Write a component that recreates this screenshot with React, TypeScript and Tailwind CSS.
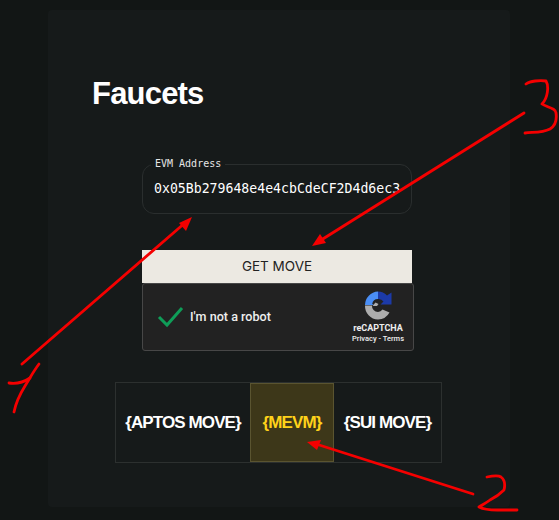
import React from 'react';

const tabs = [
    { label: '{APTOS MOVE}', width: 'w-[134px]', active: false },
    { label: '{MEVM}', width: 'w-[84px]', active: true },
    { label: '{SUI MOVE}', width: 'w-[107px]', active: false },
];

const RecaptchaLogo: React.FC = () => (
    <svg width="28" height="29" viewBox="0 0 28 29">
        <path d="M1 14 A13.5 13.5 0 0 1 14 0.5 L14 8 A6 6 0 0 0 8.2 13 L10 14 L1 14 Z" fill="#4a8ef5" />
        <path d="M14 0.5 A13.5 13.5 0 0 1 23 4.5 L27.5 1.5 L27.5 13.5 L16.5 13.5 L19.5 10.5 A6 6 0 0 0 14 8 Z" fill="#1c3aa8" />
        <path d="M1 14.5 L8 14.5 A6 6 0 0 0 14 21 A6 6 0 0 0 18.5 18.5 L25.5 21.5 A13.5 13.5 0 0 1 14 28.5 A13.5 13.5 0 0 1 1 14.5 Z" fill="#adadad" />
        <path d="M8.5 15 L11.5 11.5 L14.5 13 L13 15 Z" fill="#adadad" />
    </svg>
);

const Annotations: React.FC = () => (
    <svg className="absolute left-0 top-0 pointer-events-none" width="559" height="520" viewBox="0 0 559 520" fill="none">
        <g stroke="#f50000" strokeWidth="2.8" strokeLinecap="round" strokeLinejoin="round">
            <path d="M22 364 L186 222" />
            <path d="M39 364 C33 372 30 378 25 386 C20 394 16 402 14 412" />
            <path d="M9 383 C16 384 24 382 30 378" />
            <path d="M524 113 L318 242" />
            <path d="M526 84 C530 81 540 80 546 81 C549 86 548 98 542 104 C546 107 556 108 556 113 C557 120 555 126 550 129 C542 133 533 132 525 133" />
            <path d="M316 444 L473 494" />
            <path d="M487 477 C492 476 498 475 501 477 C505 480 505 486 504 490 C499 495 494 498 490 500 C486 503 482 505 479 507 C485 510 491 510 497 510 L517 510" />
        </g>
        <path d="M192 217 L179 223 L186 231 Z" fill="#f50000" />
        <path d="M312 246 L326 243 L320 234 Z" fill="#f50000" />
        <path d="M307 442 L321 440 L317 450 Z" fill="#f50000" />
    </svg>
);

const App: React.FC = () => {
    return (
        <div className="relative w-[559px] h-[520px] overflow-hidden bg-[#121615] pt-[10px] pl-[48px] font-['Inter',sans-serif]">
            <div className="w-[462px] h-[497px] bg-[#161a1a] rounded-sm">
                <h1 className="pl-[44px] pt-[65px] text-[31px] leading-[38px] font-bold tracking-[-0.8px] text-white font-['Liberation_Sans',sans-serif]">
                    Faucets
                </h1>

                <div className="ml-[94px] mt-[46px] w-[272px]">
                    <fieldset className="w-[270px] h-[55px] border border-[#2a2e2e] rounded-[12px] px-[8px] overflow-hidden">
                        <legend className="px-[4px] text-[10px] leading-[10px] text-[#e6e6e6] font-['DejaVu_Sans_Mono',monospace]">
                            EVM Address
                        </legend>
                        <div className="pl-[3px] pt-[11px] text-[13.2px] leading-[18px] text-white whitespace-nowrap font-['DejaVu_Sans_Mono',monospace]">
                            0x05Bb279648e4e4cbCdeCF2D4d6ec3
                        </div>
                    </fieldset>

                    <button className="block mt-[36px] w-[270px] h-[33px] bg-[#ece9e2] text-[13.5px] text-[#222]">
                        GET MOVE
                    </button>

                    <div className="w-[272px] h-[68px] bg-[#222222] border border-[#474747] rounded-[3px] flex items-center">
                        <svg className="ml-[14px]" width="28" height="22" viewBox="0 0 28 22" fill="none">
                            <path d="M2 11 L10 19 L25 2" stroke="#0f9d58" strokeWidth="3" />
                        </svg>
                        <span className="ml-[5px] text-[12.6px] text-[#eeeeee] font-medium font-['Roboto',sans-serif]">I'm not a robot</span>
                        <div className="ml-auto mr-[9px] w-[52px] flex flex-col items-center font-['Roboto',sans-serif] text-[#eeeeee]">
                            <RecaptchaLogo />
                            <span className="mt-[3px] text-[9px] leading-[11px] font-bold">reCAPTCHA</span>
                            <span className="text-[7.5px] leading-[10px] whitespace-nowrap font-medium">Privacy - Terms</span>
                        </div>
                    </div>
                </div>

                <div className="ml-[67px] mt-[31px] flex w-[327px] h-[81px] border border-[#2c302f]">
                    {tabs.map((tab) => (
                        <div
                            key={tab.label}
                            className={
                                tab.active
                                    ? `${tab.width} flex items-center justify-center bg-[#3d3719] border border-[#5a5430] text-[#ffd21a] text-[17px] font-bold tracking-[-0.9px] font-['Liberation_Sans',sans-serif]`
                                    : `${tab.width} flex items-center justify-center text-white text-[17px] font-bold tracking-[-0.9px] font-['Liberation_Sans',sans-serif]`
                            }
                        >
                            {tab.label}
                        </div>
                    ))}
                </div>
            </div>
            <Annotations />
        </div>
    );
};

export default App;
